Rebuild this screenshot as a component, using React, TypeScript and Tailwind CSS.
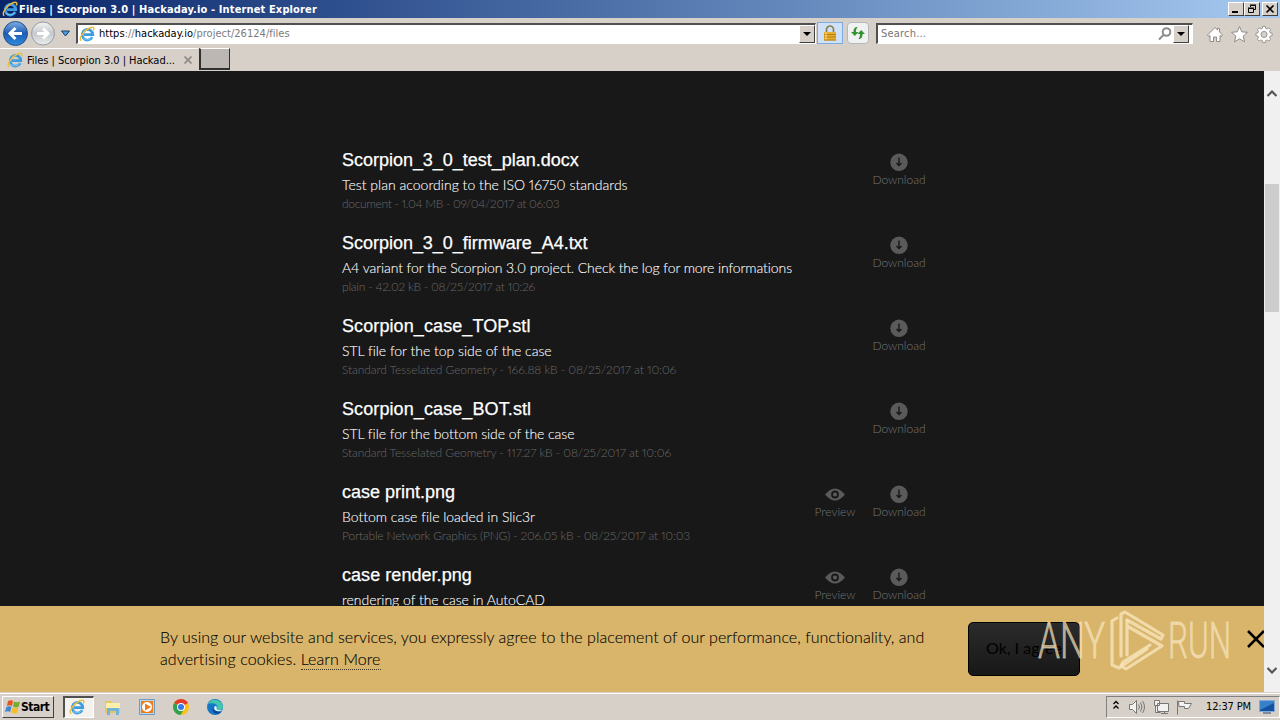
import type { ReactNode } from "react";

const files = [
  { name: "Scorpion_3_0_test_plan.docx", desc: "Test plan acoording to the ISO 16750 standards", meta: "document - 1.04 MB - 09/04/2017 at 06:03", nameFit: "tracking-[-0.02px]", descFit: "tracking-[0.02px]", metaFit: "tracking-[-0.33px]" },
  { name: "Scorpion_3_0_firmware_A4.txt", desc: "A4 variant for the Scorpion 3.0 project. Check the log for more informations", meta: "plain - 42.02 kB - 08/25/2017 at 10:26", nameFit: "tracking-[-0.02px]", descFit: "tracking-[-0.1px]", metaFit: "tracking-[-0.24px]" },
  { name: "Scorpion_case_TOP.stl", desc: "STL file for the top side of the case", meta: "Standard Tesselated Geometry - 166.88 kB - 08/25/2017 at 10:06", nameFit: "tracking-[0.1px]", descFit: "tracking-[-0.03px]", metaFit: "tracking-[-0.09px]" },
  { name: "Scorpion_case_BOT.stl", desc: "STL file for the bottom side of the case", meta: "Standard Tesselated Geometry - 117.27 kB - 08/25/2017 at 10:06", nameFit: "tracking-[0.1px]", descFit: "tracking-[-0.05px]", metaFit: "tracking-[-0.1px]" },
  { name: "case print.png", desc: "Bottom case file loaded in Slic3r", meta: "Portable Network Graphics (PNG) - 206.05 kB - 08/25/2017 at 10:03", preview: true, nameFit: "", descFit: "tracking-[-0.01px]", metaFit: "tracking-[-0.19px]" },
  { name: "case render.png", desc: "rendering of the case in AutoCAD", meta: "", preview: true, nameFit: "tracking-[0.05px]", descFit: "tracking-[-0.03px]", metaFit: "" },
];

function IeLogo({ className }: { className: string }) {
  return (
    <svg viewBox="0 0 16 16" fill="none" className={className}>
      <path d="M13.2 11.2A5.3 5.3 0 1 1 13.8 8.7H5" stroke="#3d9be0" strokeWidth="2.7" />
      <path d="M12.8 10.7A5.3 5.3 0 0 1 4 12" stroke="#7accf2" strokeWidth="1" />
      <path d="M2.2 14.8C-1 12 5.5 4 11 1.8c3.5-1.4 4.6.2 3.3 2.7" stroke="#e9bd3d" strokeWidth="1.5" />
    </svg>
  );
}

function WinButton({ children }: { children: ReactNode }) {
  return (
    <div className="flex h-[14px] w-4 items-center justify-center border border-t-white border-l-white border-r-[#404040] border-b-[#404040] bg-[#d6d0c8]">
      <svg viewBox="0 0 12 10" className="h-[10px] w-3" fill="none" stroke="#000">{children}</svg>
    </div>
  );
}

function DropArrow() {
  return (
    <div className="flex h-[18px] w-4 items-center justify-center border border-t-white border-l-white border-r-[#404040] border-b-[#404040] bg-[#d6d0c8]">
      <svg viewBox="0 0 8 4" className="h-1 w-2"><path d="M0 0h8L4 4z" /></svg>
    </div>
  );
}

function TitleBar() {
  return (
    <div className="flex h-[18px] items-center bg-linear-to-r from-[#0a246a] to-[#a6caf0] pr-[2px] pl-[2px]">
      <IeLogo className="size-4" />
      <span className="mt-px ml-px text-[11px] leading-4 font-bold tracking-[0.13px] text-white font-stretch-condensed">
        Files | Scorpion 3.0 | Hackaday.io - Internet Explorer
      </span>
      <div className="ml-auto flex">
        <WinButton><path d="M2 8h6" strokeWidth="2" /></WinButton>
        <WinButton><path d="M4.5 3V1.5h5v4H8M4 1h6M2.5 4.5h5v4h-5zM2 4h6" /></WinButton>
        <div className="w-[2px]" />
        <WinButton><path d="M2.5 1.5l7 7m0-7l-7 7" strokeWidth="1.6" /></WinButton>
      </div>
    </div>
  );
}

function NavBar() {
  return (
    <div className="flex h-[30px] items-center pl-[2px]">
      <svg viewBox="0 0 72 28" className="h-7 w-[72px] shrink-0" fill="none">
        <defs>
          <linearGradient id="back" x2="0" y2="1">
            <stop stopColor="#7eaee4" />
            <stop offset=".5" stopColor="#1d5cb5" />
            <stop offset="1" stopColor="#2c8ee0" />
          </linearGradient>
          <linearGradient id="fwd" x2="0" y2="1">
            <stop stopColor="#f4f4f4" />
            <stop offset=".5" stopColor="#c5c8cc" />
            <stop offset="1" stopColor="#eceef0" />
          </linearGradient>
        </defs>
        <circle cx="13.5" cy="14.5" r="12" fill="url(#back)" stroke="#2a4f85" />
        <path d="M20 14.5H8m5.5-5.5L8 14.5l5.5 5.5" stroke="#fff" strokeWidth="3" />
        <circle cx="41" cy="14.5" r="11.5" fill="url(#fwd)" stroke="#989ba0" />
        <path d="M35 14.5h11m-5-5l5 5-5 5" stroke="#fff" strokeWidth="3" />
        <path d="M59.500 12h8l-4 5z" fill="#4a9ddd" stroke="#173e70" />
      </svg>
      <div className="ml-[2px] flex h-[21px] w-[740px] items-center border-t-2 border-l-2 border-[#505050] border-r border-b border-r-white border-b-white bg-white pl-px">
        <IeLogo className="size-4" />
        <span className="mt-[2px] ml-1 text-[11px] tracking-[0.03px] text-[#7b7b7b]">
          <span className="text-black">https</span>://<span className="text-black">hackaday.io</span>/project/26124/files
        </span>
        <div className="ml-auto"><DropArrow /></div>
      </div>
      <div className="ml-px flex h-[22px] w-[26px] items-center justify-center border border-[#7eace0] bg-[#cee1f8]">
        <svg viewBox="0 0 14 16" className="h-4 w-[14px]" fill="none">
          <path d="M3.500 8V4.500a3.500 3.500 0 0 1 7 0V8" stroke="#8d7c4c" strokeWidth="1.700" />
          <path d="M1 7h12v8.500H1z" fill="#e8b02c" />
          <path d="M1 9.500h12M1 12h12M1 15h12" stroke="#b47c12" />
          <path d="M3 7.500v7" stroke="#ffe08a" />
        </svg>
      </div>
      <div className="ml-1 flex h-[22px] w-[22px] items-center justify-center rounded-sm border border-[#b4b7bc] bg-[#f0f1f1]">
        <svg viewBox="0 0 16 14" className="h-[14px] w-4" fill="#349331">
          <path d="M7.500 1C4.500 1 3.500 3 3.500 6H1l3.800 4L8.500 6H6c0-2 .3-3.500 1.500-5z" />
          <path d="M8.500 13c3 0 4-2 4-5H15l-3.800-4L7.500 8H10c0 2-.3 3.500-1.500 5z" />
        </svg>
      </div>
      <div className="ml-[7px] flex h-[21px] w-[317px] items-center border-t-2 border-l-2 border-[#505050] border-r border-b border-r-white border-b-white bg-white pl-[3px]">
        <span className="mt-[2px] text-[11px] tracking-[0.2px] text-[#767676]">Search...</span>
        <svg viewBox="0 0 14 14" className="ml-auto size-[14px]" fill="none" stroke="#8c8c8c" strokeWidth="2">
          <circle cx="8.500" cy="5" r="3.800" /><path d="M5.500 8L1 12.500" />
        </svg>
        <div className="ml-px mr-[3px]"><DropArrow /></div>
      </div>
      <svg viewBox="0 0 68 20" className="mt-[3px] ml-[13px] h-5 w-[68px] shrink-0" fill="#fff" stroke="#8f8c88">
        <path d="M1.500 10L9 2.500l2.500 2.500V3.500h2V7l3 3-1 1.500-1.500-1v6h-3.500V12h-3v4.500H4v-6l-1.500 1z" />
        <path d="M33.500 1.500l2.300 5.300 5.700.5-4.300 3.800 1.300 5.700-5-3-5 3 1.300-5.700-4.300-3.800 5.700-.5z" />
        <g transform="translate(7 .5) scale(.88)">
          <path d="M56.500 1h3l.5 2.400 1.500.6 2-1.300 2 2-1.300 2 .6 1.500 2.400.6v2.800l-2.400.6-.6 1.500 1.300 2-2 2-2-1.300-1.500.6-.5 2.400h-3l-.5-2.400-1.500-.6-2 1.300-2-2 1.300-2-.6-1.500-2.400-.6V8.800l2.400-.6.6-1.500-1.300-2 2-2 2 1.300L56 3.400z" />
          <circle cx="58" cy="10.200" r="3.500" fill="#d6d0c8" />
        </g>
      </svg>
    </div>
  );
}

function TabStrip() {
  return (
    <div className="flex h-[23px] items-start">
      <div className="flex h-full w-[198px] items-center border-t border-white pr-[6px] pl-[7px]">
        <IeLogo className="size-4" />
        <span className="mt-[2px] ml-1 text-[11px] tracking-[-0.04px] text-black">Files | Scorpion 3.0 | Hackad...</span>
        <svg viewBox="0 0 8 8" className="ml-auto size-2" stroke="#918d88" strokeWidth="1.800"><path d="M.5.5l7 7m0-7l-7 7" /></svg>
      </div>
      <div className="ml-px h-[22px] w-[31px] border-r border-b-2 border-l-2 border-[#303030] border-t border-t-white bg-[#bdb7b3]" />
    </div>
  );
}

function FileRow({ file }: { file: (typeof files)[number] }) {
  return (
    <div className="flex h-[83px]">
      <div className="w-[460px] whitespace-nowrap">
        <div className={`h-[26px] font-['Liberation_Sans'] text-[18px] leading-[26px] text-white [-webkit-text-stroke:0.25px_white] ${file.nameFit}`}>{file.name}</div>
        <div className={`h-[25px] text-[14px] leading-[23px] font-light text-white [-webkit-text-stroke:0.1px_white] ${file.descFit}`}>{file.desc}</div>
        <div className={`h-[13px] text-[12px] leading-[11px] font-light text-[#686868] ${file.metaFit}`}>{file.meta}</div>
      </div>
      <div className="flex w-[124px] justify-end pt-[6px] text-[12px] font-light text-[#757575]">
        {file.preview && (
          <div className="flex w-[54px] flex-col items-center">
            <svg viewBox="0 0 20 18" className="mb-px h-[18px] w-5">
              <path d="M0 9.500Q10-2.500 20 9.500 10 21.500 0 9.500z" fill="#5a5a5a" />
              <circle cx="10" cy="9.500" r="3" fill="none" stroke="#181818" strokeWidth="1.800" />
            </svg>
            <span className="leading-4">Preview</span>
          </div>
        )}
        <div className="ml-[10px] flex w-[54px] flex-col items-center">
          <svg viewBox="0 0 18 18" className="mb-px size-[18px]">
            <circle cx="9" cy="9.300" r="8.700" fill="#5a5a5a" />
            <path d="M9 4.500v8M6.500 10l2.500 2.500 2.500-2.500" fill="none" stroke="#181818" strokeWidth="1.400" />
          </svg>
          <span className="leading-4">Download</span>
        </div>
      </div>
    </div>
  );
}

function Watermark() {
  return (
    <div className="absolute top-[4px] left-[1038px] flex h-[62px] items-center font-['Roboto'] text-[50px] text-[#f8e6c0]/70 [-webkit-text-stroke:0.8px_#f8e6c090]">
      <span className="w-[65px]"><span className="inline-block origin-left scale-x-[.7] font-light">ANY</span></span>
      <svg viewBox="0 0 62 62" className="h-[62px] w-[62px] shrink-0" fill="none" stroke="#f8e5ba" strokeOpacity=".8" strokeWidth="3.200" strokeLinejoin="round" strokeLinecap="round">
        <path d="M14 8l-5 3v44l7 3 28-19" />
        <path d="M18 46V4l4-2 38 23-2 4-34-19" />
        <path d="M24 11v34M24 16l35 20-36 23-5-3 2-4 27-17" />
      </svg>
      <span className="ml-[3px]"><span className="inline-block origin-left scale-x-[.63] font-light">RUN</span></span>
    </div>
  );
}

function CookieBar() {
  return (
    <div className="absolute bottom-0 left-0 flex h-[86px] w-full overflow-hidden bg-[#d8b56a] pl-40">
      <p className="w-[808px] pt-5 text-[16px] leading-[22px] font-light whitespace-nowrap text-black [-webkit-text-stroke:0.1px_black]">
        <span className="tracking-[0.045px]">By using our website and services, you expressly agree to the placement of our performance, functionality, and</span><br />
        <span className="tracking-[0.09px]">advertising cookies. <span className="inline-block h-[22px] border-b border-dotted border-black/70 leading-[22px]">Learn More</span></span>
      </p>
      <div className="mt-4 flex h-[54px] w-[112px] items-center justify-center rounded-[5px] border border-black bg-linear-to-b from-[#2b2b2b] to-[#181818] pb-[2px] text-[16px] text-black">
        Ok, I agree
      </div>
      <svg viewBox="0 0 18 18" className="mt-6 -mr-[1px] ml-auto size-[18px]" stroke="#000" strokeWidth="2.500"><path d="M1 1l16 16m0-16L1 17" /></svg>
      <Watermark />
    </div>
  );
}

function ScrollBar() {
  return (
    <div className="flex w-4 flex-col items-center bg-[#f0f0f0]">
      <svg viewBox="0 0 10 7" className="mt-[19px] h-[7px] w-[10px]" fill="none" stroke="#555" strokeWidth="2.200"><path d="M.5 6L5 1.500 9.500 6" /></svg>
      <div className="mt-[87px] h-32 w-[14px] bg-[#cdcdcd]" />
      <svg viewBox="0 0 10 7" className="mt-auto mb-[18px] h-[7px] w-[10px]" fill="none" stroke="#555" strokeWidth="2.200"><path d="M.5 1L5 5.500 9.500 1" /></svg>
    </div>
  );
}

function Taskbar() {
  return (
    <div className="flex h-7 items-center border-t border-[#d6d0c8] pl-[2px] shadow-[inset_0_1px_white]">
      <div className="flex h-[22px] w-[52px] items-center border border-t-white border-l-white border-r-[#404040] border-b-[#404040] pl-[2px]">
        <svg viewBox="0 0 16 16" className="size-4 shrink-0">
          <path d="M3 2q3-1.500 5 0L7 7Q5 5.500 2 7z" fill="#e65425" />
          <path d="M9 2.500q3 1.500 6 0L13.500 8q-3 1-5.500-.5z" fill="#77ac30" />
          <path d="M1.500 8q3-1.500 5 0L5 13q-2-1.500-5 0z" fill="#3c87d5" />
          <path d="M7.500 8.500q3 1.500 6 0L12 14q-3 1-6-.5z" fill="#f6bc29" />
        </svg>
        <span className="text-[12px] font-bold tracking-[-0.5px] text-black font-stretch-condensed">Start</span>
      </div>
      <div className="ml-[9px] flex h-[22px] w-[31px] items-center justify-center border-t-2 border-l-2 border-r border-b border-t-[#505050] border-l-[#505050] border-white bg-[#f4f2ef]">
        <IeLogo className="mr-1 size-4" />
      </div>
      <svg viewBox="0 0 18 18" className="ml-[10px] size-[18px]">
        <path d="M1 3h6l1 2h8v10H1z" fill="#e5c564" />
        <path d="M2 5h14v5H2z" fill="#fff0a9" />
        <path d="M3 10h12v7h-3v-4H6v4H3z" fill="#70b4d7" />
      </svg>
      <svg viewBox="0 0 18 18" className="ml-4 size-[18px]">
        <path d="M1.500 1.500h15v15h-15z" fill="#bad7ee" stroke="#6c9cc6" />
        <path d="M3 3h12v12H3z" fill="#ee7c17" /><circle cx="9" cy="9" r="5" fill="#fff" /><path d="M7 5.500l6 3.500-6 3.500z" fill="#ee7c17" />
      </svg>
      <svg viewBox="0 0 16 16" className="ml-[17px] size-4">
        <circle cx="8" cy="8" r="8" fill="#fbc116" />
        <path d="M8 8L1.100 4a8 8 0 0 1 13.800 0z" fill="#e33b2e" />
        <path d="M8 8L1.100 4a8 8 0 0 0 6.400 12l3-5z" fill="#31a350" />
        <circle cx="8" cy="8" r="4" fill="#fff" /><circle cx="8" cy="8" r="3" fill="#3979e5" />
      </svg>
      <svg viewBox="0 0 16 16" className="ml-[18px] size-4">
        <circle cx="8" cy="8" r="8" fill="#1776c8" />
        <path d="M1 5a8 8 0 0 1 15 3c0 4-6 4-6 1 2-4-5-6-9-4z" fill="#42c7ac" />
        <path d="M6 8q0 5 8.500 4.500-1.500 2-4 2.500Q4 14 6 8z" fill="#0b4b94" />
        <path d="M8 7c2 0 2 1 1.500 2.200Q10 12 15 11l-1 1q-6 1-7-3z" fill="#eaf5f7" />
      </svg>
      <div className="ml-auto flex h-[22px] w-[174px] items-center border border-t-[#808080] border-l-[#808080] border-r-white border-b-white pl-[5px]">
        <svg viewBox="0 0 8 10" className="mb-1 h-[10px] w-2" fill="none" stroke="#000" strokeWidth="1.300"><path d="M1.500 4L4 1.500 6.500 4M1.500 8.500L4 6l2.500 2.500" /></svg>
        <svg viewBox="0 0 66 16" className="ml-[9px] h-4 w-[66px] shrink-0" fill="#f2f2f0" stroke="#777">
          <path d="M.5 5.500h3l4-4v13l-4-4h-3z" />
          <path d="M9.500 5.500q2 2.500 0 5M11.500 3.500q3 4.500 0 9M13.500 2q4 6 0 12" fill="none" />
          <path d="M28.500 4.500h11v8h-11zM32 14.500h7M35.500 12.500v2M25.500 1.500h5v5h-5zM26.500 6.500v7h5" />
          <path d="M48.500 15.500v-14M49.500 2.500h6v2h7l-3 5h-4v-2h-5.500z" />
        </svg>
        <span className="mt-[2px] ml-[11px] text-[11px] tracking-[-0.15px] whitespace-nowrap text-black">12:37 PM</span>
        <svg viewBox="0 0 16 14" className="mr-[4px] ml-auto h-[14px] w-4">
          <path d="M.5.500h15v11H.5z" fill="#1551a1" stroke="#80acd8" /><path d="M1 10L15 3V1H1z" fill="#397fca" /><path d="M4 13h8" stroke="#29476e" />
        </svg>
      </div>
    </div>
  );
}

export default function App() {
  return (
    <div className="flex h-[720px] w-[1280px] flex-col overflow-hidden bg-[#d6d0c8] font-['DejaVu_Sans_Condensed','DejaVu_Sans',sans-serif]">
      <TitleBar />
      <NavBar />
      <TabStrip />
      <div className="flex h-[621px]">
        <div className="relative w-[1264px] overflow-hidden bg-[#181818] font-['Lato'] [font-variant-ligatures:none] [font-variant-numeric:proportional-nums]">
          <div className="ml-[342px] w-[584px] pt-[76px]">
            {files.map((file) => <FileRow key={file.name} file={file} />)}
          </div>
          <CookieBar />
        </div>
        <ScrollBar />
      </div>
      <Taskbar />
    </div>
  );
}
